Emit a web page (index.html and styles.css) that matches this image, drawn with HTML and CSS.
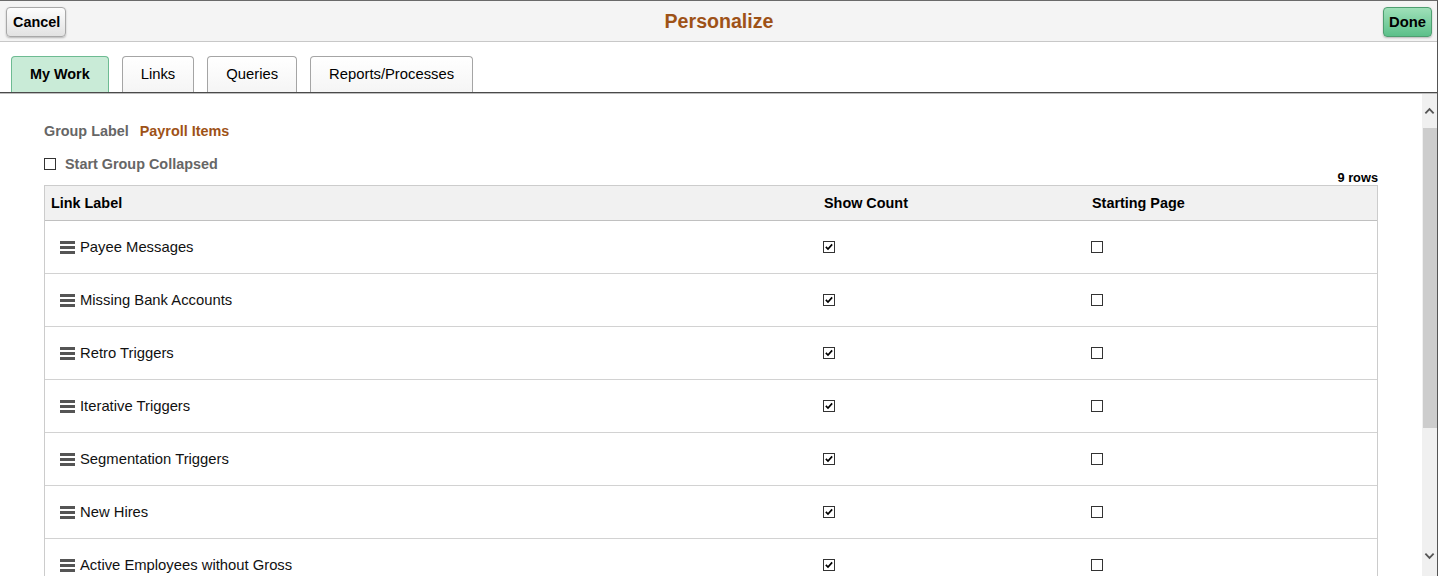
FILE: index.html
```html
<!DOCTYPE html>
<html>
<head>
<meta charset="utf-8">
<title>Personalize</title>
<link rel="stylesheet" href="styles.css">
</head>
<body>
<div class="frame">
  <header class="header">
    <div class="hleft"><button class="btn btn-cancel">Cancel</button></div>
    <h1 class="title">Personalize</h1>
    <div class="hright"><button class="btn btn-done">Done</button></div>
  </header>
  <nav class="tabbar">
    <div class="tab active">My Work</div>
    <div class="tab">Links</div>
    <div class="tab">Queries</div>
    <div class="tab">Reports/Processes</div>
  </nav>
  <div class="content">
    <main class="main">
      <div class="group"><span class="glabel">Group Label</span><span class="gvalue">Payroll Items</span></div>
      <div class="startrow"><span class="cb"></span><span class="startlabel">Start Group Collapsed</span></div>
      <div class="count">9 rows</div>
      <div class="grid">
        <div class="row head">
          <div class="cell">Link Label</div>
          <div class="cell">Show Count</div>
          <div class="cell">Starting Page</div>
        </div>
        <div class="row">
          <div class="cell name"><span class="drag"><i></i><i></i><i></i></span>Payee Messages</div>
          <div class="cell chk"><span class="cb on"><svg viewBox="0 0 12 12"><path d="M2.2 5.8 L4.8 8.4 L9.8 2.8"/></svg></span></div>
          <div class="cell chk"><span class="cb"></span></div>
        </div>
        <div class="row">
          <div class="cell name"><span class="drag"><i></i><i></i><i></i></span>Missing Bank Accounts</div>
          <div class="cell chk"><span class="cb on"><svg viewBox="0 0 12 12"><path d="M2.2 5.8 L4.8 8.4 L9.8 2.8"/></svg></span></div>
          <div class="cell chk"><span class="cb"></span></div>
        </div>
        <div class="row">
          <div class="cell name"><span class="drag"><i></i><i></i><i></i></span>Retro Triggers</div>
          <div class="cell chk"><span class="cb on"><svg viewBox="0 0 12 12"><path d="M2.2 5.8 L4.8 8.4 L9.8 2.8"/></svg></span></div>
          <div class="cell chk"><span class="cb"></span></div>
        </div>
        <div class="row">
          <div class="cell name"><span class="drag"><i></i><i></i><i></i></span>Iterative Triggers</div>
          <div class="cell chk"><span class="cb on"><svg viewBox="0 0 12 12"><path d="M2.2 5.8 L4.8 8.4 L9.8 2.8"/></svg></span></div>
          <div class="cell chk"><span class="cb"></span></div>
        </div>
        <div class="row">
          <div class="cell name"><span class="drag"><i></i><i></i><i></i></span>Segmentation Triggers</div>
          <div class="cell chk"><span class="cb on"><svg viewBox="0 0 12 12"><path d="M2.2 5.8 L4.8 8.4 L9.8 2.8"/></svg></span></div>
          <div class="cell chk"><span class="cb"></span></div>
        </div>
        <div class="row">
          <div class="cell name"><span class="drag"><i></i><i></i><i></i></span>New Hires</div>
          <div class="cell chk"><span class="cb on"><svg viewBox="0 0 12 12"><path d="M2.2 5.8 L4.8 8.4 L9.8 2.8"/></svg></span></div>
          <div class="cell chk"><span class="cb"></span></div>
        </div>
        <div class="row">
          <div class="cell name"><span class="drag"><i></i><i></i><i></i></span>Active Employees without Gross</div>
          <div class="cell chk"><span class="cb on"><svg viewBox="0 0 12 12"><path d="M2.2 5.8 L4.8 8.4 L9.8 2.8"/></svg></span></div>
          <div class="cell chk"><span class="cb"></span></div>
        </div>
      </div>
    </main>
    <div class="scrollbar">
      <div class="arrow"><svg viewBox="0 0 12 8"><path d="M1.5 6.5 L6 2 L10.5 6.5"/></svg></div>
      <div class="thumb"></div>
      <div class="track"></div>
      <div class="arrow down"><svg viewBox="0 0 12 8"><path d="M1.5 1.5 L6 6 L10.5 1.5"/></svg></div>
    </div>
  </div>
</div>
</body>
</html>
```

FILE: styles.css
```css
html, body {
  margin: 0;
  padding: 0;
  background: #fff;
}
body {
  font-family: "Liberation Sans", Arial, sans-serif;
  font-size: 14.4px;
  color: #000;
}
.frame {
  width: 1438px;
  height: 576px;
  box-sizing: border-box;
  border-top: 1px solid #6a6a6a;
  border-right: 1px solid #555;
  display: flex;
  flex-direction: column;
  overflow: hidden;
}
.header {
  flex: none;
  background: #f4f4f4;
  border-bottom: 1px solid #c8c8c8;
  display: grid;
  grid-template-columns: 1fr auto 1fr;
  align-items: start;
  padding: 6px 5px 0 6px;
  height: 34px;
}
.hright {
  display: flex;
  justify-content: flex-end;
}
.btn {
  font-family: "Liberation Sans", Arial, sans-serif;
  font-size: 14.4px;
  font-weight: bold;
  color: #000;
  height: 30px;
  padding: 0 6px;
  border-radius: 4px;
  cursor: pointer;
}
.btn-cancel {
  width: 60px;
  background: linear-gradient(#fdfdfd, #e2e2e2);
  border: 1px solid #a8a8a8;
  box-shadow: 0 1px 2px rgba(0,0,0,0.25);
}
.btn-done {
  width: 49px;
  background: linear-gradient(#9fe0b9, #5cc08a);
  border: 1px solid #4e9e70;
  box-shadow: 0 1px 2px rgba(0,0,0,0.25);
  padding: 0 3px;
  font-size: 14.8px;
}
.title {
  margin: 0;
  font-size: 19.6px;
  font-weight: bold;
  color: #9e5217;
  line-height: 28px;
}
.tabbar {
  flex: none;
  height: 36px;
  padding: 14px 0 0 11px;
  border-bottom: 1px solid #4a4a4a;
  box-shadow: 0 1px 0 #bdbdbd;
  display: flex;
  gap: 13px;
  align-items: flex-end;
  position: relative;
}
.tab {
  height: 36px;
  box-sizing: border-box;
  padding: 0 18px 2px;
  border: 1px solid #a5a5a5;
  border-bottom: none;
  border-radius: 4px 4px 0 0;
  display: flex;
  align-items: center;
  color: #000;
  font-size: 14.8px;
  background: linear-gradient(#ffffff, #f5f5f5);
}
.tab.active {
  background: #c9ebd7;
  border-color: #6dbb92;
  font-weight: bold;
  font-size: 14.4px;
  padding: 0 18px 1px;
}
.content {
  flex: 1;
  display: flex;
  min-height: 0;
}
.main {
  flex: 1;
  padding: 29px 44px 0 44px;
  overflow: hidden;
}
.group {
  line-height: 18px;
  font-weight: bold;
  margin-bottom: 17px;
}
.glabel {
  color: #666;
  margin-right: 11px;
}
.gvalue {
  color: #9e5217;
}
.startrow {
  display: flex;
  align-items: center;
  height: 14px;
  font-weight: bold;
  color: #666;
}
.startlabel {
  margin-left: 9px;
}
.count {
  text-align: right;
  font-size: 12.8px;
  font-weight: bold;
  line-height: 13px;
  margin-bottom: 1px;
}
.cb {
  width: 12px;
  height: 12px;
  box-sizing: border-box;
  border: 1px solid #333;
  background: #fff;
  display: inline-block;
  flex: none;
}
.cb svg {
  display: block;
  width: 10px;
  height: 10px;
  fill: none;
  stroke: #000;
  stroke-width: 2;
}
.grid {
  border: 1px solid #cccccc;
  border-bottom: none;
}
.row {
  display: grid;
  grid-template-columns: 773px 268px 1fr;
  height: 53px;
  box-sizing: border-box;
  border-bottom: 1px solid #d2d2d2;
  align-items: center;
}
.row.head {
  height: 35px;
  background: #f1f1f1;
  font-weight: bold;
  border-bottom: 1px solid #c0c0c0;
}
.cell {
  padding-left: 6px;
}
.cell.name {
  padding-left: 15px;
  display: flex;
  align-items: center;
  color: #111;
  font-size: 14.8px;
}
.cell.chk {
  padding-left: 5px;
  display: flex;
  align-items: center;
  padding-bottom: 1px;
}
.drag {
  width: 15px;
  display: flex;
  flex-direction: column;
  gap: 2px;
  margin-right: 5px;
  margin-top: 1px;
}
.drag i {
  display: block;
  height: 3px;
  background: #555;
}
.scrollbar {
  width: 15px;
  flex: none;
  background: #f0f0f0;
  display: flex;
  flex-direction: column;
}
.arrow {
  height: 35px;
  display: flex;
  align-items: center;
  justify-content: center;
}
.arrow svg {
  width: 11px;
  height: 8px;
  fill: none;
  stroke: #555;
  stroke-width: 2;
}
.arrow.down {
  height: 40px;
}
.thumb {
  height: 300px;
  background: #cdcdcd;
  margin-left: 1px;
}
.track {
  flex: 1;
}
```
